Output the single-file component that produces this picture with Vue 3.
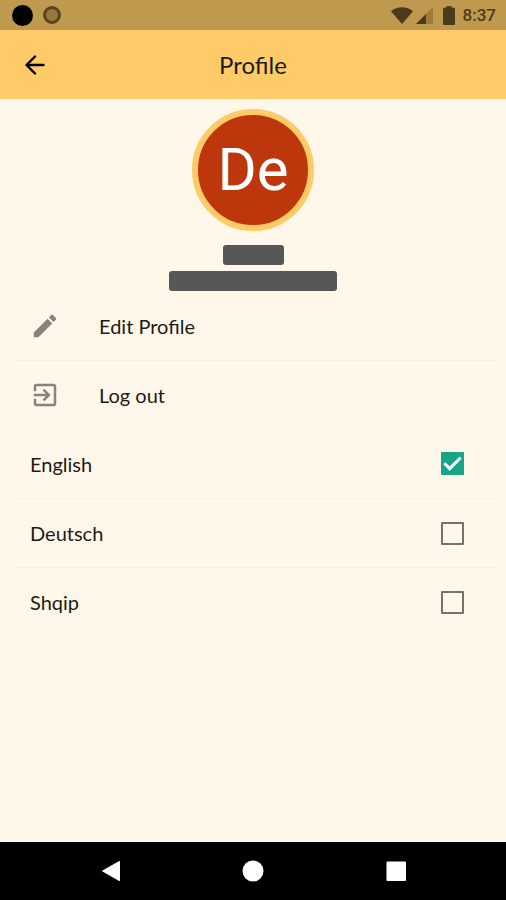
<template>
  <div class="screen">
    <div class="status-bar">
      <div class="notifications">
        <span class="dot"></span>
        <span class="ring"></span>
      </div>
      <div class="system">
        <svg class="wifi" viewBox="0 0 22 17" aria-hidden="true">
          <path d="M0 4.2C6.5-1.2 15.500-1.2 22 4.200L11 17z" />
        </svg>
        <svg class="signal" viewBox="0 0 17 17" aria-hidden="true">
          <path d="M17 0V17H0z" opacity="0.3" />
          <path d="M10 7V17H0z" />
        </svg>
        <svg class="battery" viewBox="0 0 12 19" aria-hidden="true">
          <path d="M3.500 0h5v1.500H10a2 2 0 0 1 2 2V18a1 1 0 0 1-1 1H1a1 1 0 0 1-1-1V3.500a2 2 0 0 1 2-2h1.500z" />
        </svg>
        <span class="time">8:37</span>
      </div>
    </div>

    <header class="app-bar">
      <button class="back" type="button" aria-label="Back">
        <svg viewBox="0 0 20 20" aria-hidden="true">
          <path d="M18.500 10H2M10 1.500L1.500 10l8.500 8.500" />
        </svg>
      </button>
      <h1>Profile</h1>
    </header>

    <main>
      <section class="profile">
        <div class="avatar">De</div>
        <div class="redacted name"></div>
        <div class="redacted email"></div>
      </section>

      <nav class="list">
        <button class="row action" type="button">
          <svg viewBox="0 0 24 24" aria-hidden="true">
            <path d="M3 17.250V21h3.750L17.810 9.940l-3.750-3.750L3 17.250zM20.710 7.040c.39-.39.39-1.020 0-1.410l-2.340-2.340c-.39-.39-1.020-.39-1.410 0l-1.830 1.830 3.750 3.750 1.830-1.830z" />
          </svg>
          <span>Edit Profile</span>
        </button>
        <button class="row action" type="button">
          <svg viewBox="0 0 24 24" aria-hidden="true">
            <path d="M10.090 15.590L11.500 17l5-5-5-5-1.410 1.410L12.670 11H3v2h9.670l-2.580 2.590zM19 3H5c-1.110 0-2 .9-2 2v4h2V5h14v14H5v-4H3v4c0 1.100.89 2 2 2h14c1.100 0 2-.9 2-2V5c0-1.100-.9-2-2-2z" />
          </svg>
          <span>Log out</span>
        </button>
      </nav>

      <div class="list">
        <label v-for="lang in languages" :key="lang" class="row language">
          <span>{{ lang }}</span>
          <input
            type="checkbox"
            :checked="selected === lang"
            @change="select(lang, $event)"
          />
        </label>
      </div>
    </main>

    <footer class="system-nav">
      <button type="button" aria-label="System back">
        <svg viewBox="0 0 22 22" aria-hidden="true">
          <path d="M21 1.500v19a.5.5 0 0 1-.8.400L3.500 11.600a.7.7 0 0 1 0-1.200L20.200 1.100a.5.5 0 0 1 .8.400z" />
        </svg>
      </button>
      <button type="button" aria-label="Home">
        <svg viewBox="0 0 22 22" aria-hidden="true">
          <circle cx="11" cy="11" r="10.500" />
        </svg>
      </button>
      <button type="button" aria-label="Recent apps">
        <svg viewBox="0 0 22 22" aria-hidden="true">
          <rect x="1.500" y="1.500" width="19.500" height="19.500" rx="1" />
        </svg>
      </button>
    </footer>
  </div>
</template>

<script setup>
import { ref } from "vue";

const languages = ["English", "Deutsch", "Shqip"];
const selected = ref("English");

const select = (lang, event) => {
  selected.value = lang;
  event.target.checked = true;
};
</script>

<style>
body {
  margin: 0;
  background: #fff8ea;
}
</style>

<style scoped>
.screen {
  display: flex;
  flex-direction: column;
  min-height: 100vh;
  background: #fff8ea;
  color: #1c1b16;
  font-family: Lato, "Open Sans", sans-serif;
}

button {
  padding: 0;
  border: 0;
  background: none;
  color: inherit;
  font: inherit;
  cursor: pointer;
}

svg {
  display: block;
  flex: none;
}

.status-bar {
  display: flex;
  align-items: center;
  justify-content: space-between;
  height: 30px;
  padding: 0 10px 0 12px;
  background: #bf994e;
  color: #4a3b1c;
}

.notifications,
.system {
  display: flex;
  align-items: center;
}

.notifications {
  gap: 10px;
}

.dot {
  width: 21px;
  height: 21px;
  border-radius: 50%;
  background: #000;
}

.ring {
  width: 12px;
  height: 12px;
  border: 3px solid #58451f;
  border-radius: 50%;
  background: #947a42;
}

.system svg {
  fill: currentColor;
}

.wifi {
  width: 22px;
  height: 17px;
}

.signal {
  width: 17px;
  height: 17px;
  margin-left: 3px;
}

.battery {
  width: 12px;
  height: 19px;
  margin-left: 10px;
}

.time {
  margin-left: 8px;
  font-family: Roboto, sans-serif;
  font-size: 17px;
  font-weight: 500;
  line-height: 20px;
}

.app-bar {
  display: grid;
  grid-template-columns: 70px 1fr 70px;
  align-items: center;
  height: 69px;
  background: #ffcb68;
}

.back {
  display: flex;
  align-items: center;
  justify-content: center;
  height: 48px;
  color: #000;
}

.back svg {
  width: 20px;
  height: 20px;
  fill: none;
  stroke: currentColor;
  stroke-width: 2.4;
  stroke-linecap: round;
  stroke-linejoin: round;
}

h1 {
  margin: 0;
  font-size: 24px;
  font-weight: 400;
  line-height: 28px;
  text-align: center;
}

main {
  flex: 1;
}

.profile {
  display: flex;
  flex-direction: column;
  align-items: center;
  padding-top: 10px;
}

.avatar {
  display: flex;
  align-items: center;
  justify-content: center;
  width: 110px;
  height: 110px;
  border: 6px solid #ffcb68;
  border-radius: 50%;
  background: #be360c;
  color: #fff;
  font-family: Roboto, sans-serif;
  font-size: 60px;
  line-height: 64px;
}

.redacted {
  height: 20px;
  border-radius: 3px;
  background: #575757;
}

.name {
  width: 61px;
  margin-top: 14px;
}

.email {
  width: 168px;
  margin-top: 6px;
}

.list {
  padding: 0 10px 0 12px;
}

.row {
  display: flex;
  align-items: center;
  box-sizing: border-box;
  width: 100%;
  height: 69px;
  padding: 0 32px 0 18px;
  font-size: 20px;
  line-height: 24px;
  text-align: left;
}

.row + .row {
  border-top: 1px solid #f8eee1;
}

.action svg {
  width: 30px;
  height: 30px;
  margin-right: 39px;
  fill: #87847a;
}

.language {
  justify-content: space-between;
  cursor: pointer;
}

input {
  display: flex;
  align-items: center;
  justify-content: center;
  appearance: none;
  box-sizing: border-box;
  width: 23px;
  height: 23px;
  margin: 0;
  border: 2px solid #75726a;
  border-radius: 1px;
}

input:checked {
  border-color: #17a589;
  background: #17a589;
}

input:checked::after {
  content: "";
  box-sizing: border-box;
  flex: none;
  width: 17px;
  height: 9px;
  margin-bottom: 4px;
  border: solid #fff;
  border-width: 0 0 3px 3px;
  transform: rotate(-45deg);
}

.system-nav {
  display: flex;
  align-items: center;
  justify-content: space-between;
  height: 58px;
  padding: 0 85px;
  background: #000;
}

.system-nav button {
  display: flex;
  align-items: center;
  justify-content: center;
  width: 50px;
  height: 48px;
}

.system-nav svg {
  width: 22px;
  height: 22px;
  fill: #fff;
}
</style>
